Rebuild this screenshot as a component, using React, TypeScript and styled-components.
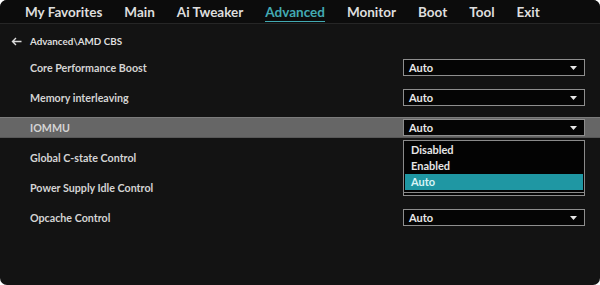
import * as React from "react"
import styled, { createGlobalStyle } from "styled-components"

const tabs = ["My Favorites", "Main", "Ai Tweaker", "Advanced", "Monitor", "Boot", "Tool", "Exit"]

const settings = [
  { name: "Core Performance Boost", value: "Auto" },
  { name: "Memory interleaving", value: "Auto" },
  { name: "IOMMU", value: "Auto", selected: true },
  { name: "Global C-state Control", value: "Auto", covered: true },
  { name: "Power Supply Idle Control", value: "Auto", covered: true },
  { name: "Opcache Control", value: "Auto" },
]

const options = ["Disabled", "Enabled", "Auto"]

function Caret() {
  return <svg width="7" height="4" viewBox="0 0 7 4">
    <path d="M0 0 L7 0 L3.5 4 Z" fill="#e8e8e8" />
  </svg>
}

function BackArrow() {
  return <svg width="11" height="9" viewBox="0 0 11 9">
    <path d="M10.5 4.5 H1.5 M5 1 L1.5 4.5 L5 8" stroke="#dcdcdc" strokeWidth="1.4" fill="none" />
  </svg>
}

export default function App() {
  return <>
    <GlobalStyle />
    <Screen>
      <TopBar>
        {tabs.map(tab => <Tab key={tab} active={tab === "Advanced"}>{tab}</Tab>)}
      </TopBar>
      <Breadcrumb>
        <BackArrow />
        <span>Advanced\AMD CBS</span>
      </Breadcrumb>
      <SettingsList>
        {settings.map(item => <Row key={item.name} selected={item.selected}>
          <Label>{item.name}</Label>
          <SelectWrap>
            <Select covered={item.covered}>
              <span>{item.value}</span>
              <Caret />
            </Select>
            {item.selected && <OptionList>
              {options.map(opt => <Option key={opt} active={opt === item.value}>{opt}</Option>)}
            </OptionList>}
          </SelectWrap>
        </Row>)}
      </SettingsList>
    </Screen>
  </>
}

const GlobalStyle = createGlobalStyle`
  body {
    margin: 0;
    background: #ffffff;
    font-family: Lato, "Open Sans", sans-serif;
  }
`

const Screen = styled.div`
  width: 600px;
  height: 285px;
  background: #131313;
  border-radius: 7px;
  overflow: hidden;
  display: flex;
  flex-direction: column;
  color: #e2e2e2;
`

const TopBar = styled.div`
  height: 23px;
  flex-shrink: 0;
  display: flex;
  align-items: center;
  gap: 22px;
  padding-left: 25px;
  background: #0c0c0c;
  border-bottom: 1px solid #262626;
`

const Tab = styled.div<{ active?: boolean }>`
  font-size: 13.5px;
  font-weight: 700;
  line-height: 18px;
  color: ${p => p.active ? "#43aab3" : "#dedede"};
  border-bottom: 1px solid ${p => p.active ? "#43aab3" : "transparent"};
  margin-top: 2px;
`

const Breadcrumb = styled.div`
  display: flex;
  align-items: center;
  gap: 8px;
  padding: 9px 0 0 11px;
  height: 16px;
  font-size: 9.8px;
  font-weight: 700;
  color: #dedede;
`

const SettingsList = styled.div`
  display: flex;
  flex-direction: column;
  gap: 9px;
  margin-top: 8px;
`

const Row = styled.div<{ selected?: boolean }>`
  height: 21px;
  box-sizing: border-box;
  display: flex;
  align-items: center;
  justify-content: space-between;
  padding: 0 15px 0 30px;
  background: ${p => p.selected ? "#666666" : "transparent"};
  border-top: 1px solid ${p => p.selected ? "#7c7c7c" : "transparent"};
  border-bottom: 1px solid ${p => p.selected ? "#575757" : "transparent"};
`

const Label = styled.div`
  font-size: 10.7px;
  font-weight: 700;
  color: #d4d4d4;
`

const SelectWrap = styled.div`
  position: relative;
`

const Select = styled.div<{ covered?: boolean }>`
  width: 182px;
  height: 17px;
  box-sizing: border-box;
  display: flex;
  align-items: center;
  justify-content: space-between;
  padding: 0 7px 0 5px;
  background: #050505;
  border: 1px solid #8e8e8e;
  font-size: 11px;
  font-weight: 700;
  color: #e8e8e8;
  & > * {
    visibility: ${p => p.covered ? "hidden" : "visible"};
  }
`

const OptionList = styled.div`
  position: absolute;
  z-index: 2;
  top: 21px;
  left: 0;
  width: 182px;
  height: 53px;
  box-sizing: border-box;
  padding: 1px 1px 0;
  background: #030303;
  border: 1px solid #8a8a8a;
  display: flex;
  flex-direction: column;
`

const Option = styled.div<{ active?: boolean }>`
  height: 16px;
  line-height: 16px;
  padding-left: 6px;
  font-size: 11px;
  font-weight: 700;
  color: ${p => p.active ? "#d8f4f6" : "#e6e6e6"};
  background: ${p => p.active ? "#1f97a3" : "transparent"};
`
